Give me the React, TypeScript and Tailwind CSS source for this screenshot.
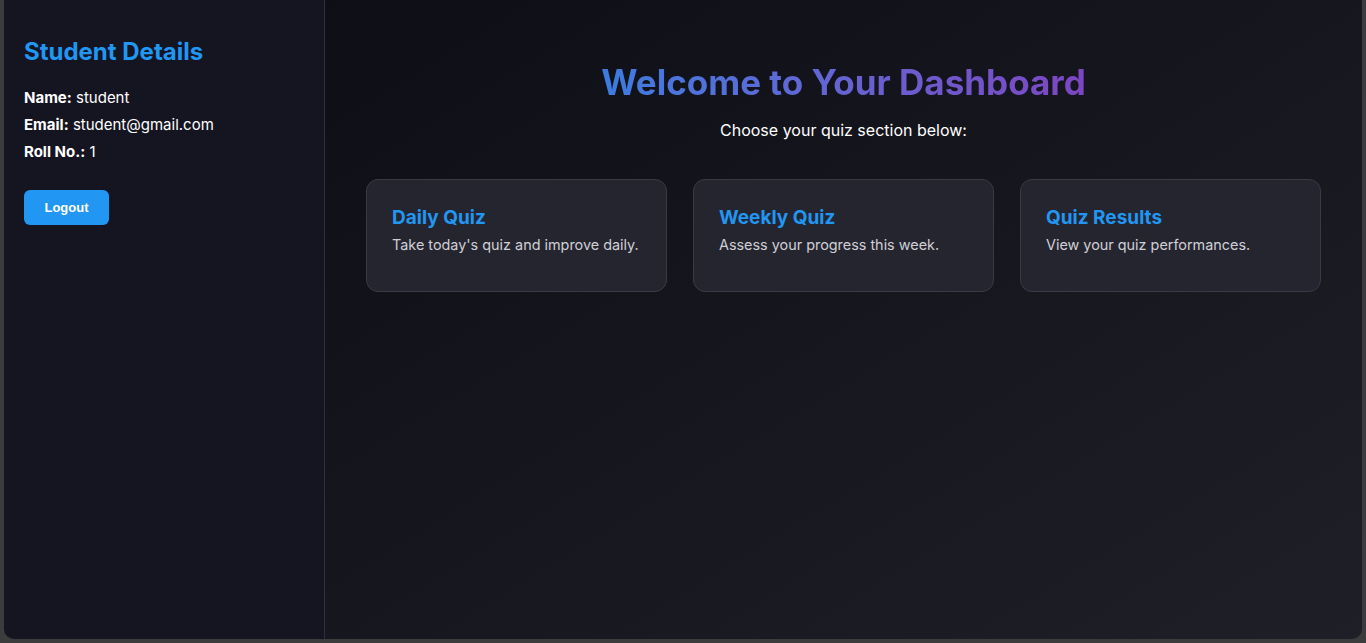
const student = {
  name: "student",
  email: "student@gmail.com",
  roll: "1",
};

const sections = [
  { title: "Daily Quiz", text: "Take today's quiz and improve daily." },
  { title: "Weekly Quiz", text: "Assess your progress this week." },
  { title: "Quiz Results", text: "View your quiz performances." },
];

export default function App() {
  return (
    <div className="h-[643px] w-full bg-[#3c3c3c] px-[4px] pb-[4px] font-['Inter',sans-serif]">
      <div className="flex h-full overflow-hidden rounded-b-[10px]">
        {/* Sidebar */}
        <aside className="w-[321px] shrink-0 border-r border-[#2f2f3d] bg-[#151522] px-5 pt-[36px]">
          <h2 className="text-[24px] font-bold leading-[32px] text-[#2196f3]">
            Student Details
          </h2>
          <div className="mt-[19px] space-y-[5px] text-[15px] leading-[22px] text-white">
            <p>
              <span className="font-bold">Name:</span> {student.name}
            </p>
            <p>
              <span className="font-bold">Email:</span> {student.email}
            </p>
            <p>
              <span className="font-bold">Roll No.:</span> {student.roll}
            </p>
          </div>
          <button className="mt-[27px] h-[35px] w-[85px] rounded-[6px] bg-[#2196f3] font-['Liberation_Sans',Arial,sans-serif] text-[13px] font-bold text-white">
            Logout
          </button>
        </aside>

        {/* Main */}
        <main className="flex-1 bg-gradient-to-br from-[#0e0e16] to-[#1f1f28] px-[41px] pt-[59px]">
          <div className="text-center">
            <h1 className="inline-block bg-gradient-to-r from-[#3a7ce0] to-[#7c46c3] bg-clip-text text-[35px] font-bold leading-[46px] text-transparent">
              Welcome to Your Dashboard
            </h1>
          </div>
          <p className="mt-[13px] text-center text-[16px] leading-[24px] text-white">
            Choose your quiz section below:
          </p>
          <div className="mt-[37px] grid grid-cols-3 gap-[26px]">
            {sections.map((s) => (
              <div
                key={s.title}
                className="h-[113px] rounded-[12px] border border-[#3a3a46] bg-[#25252f] px-[25px] pt-[24px]"
              >
                <h3 className="text-[19px] font-bold leading-[28px] text-[#2196f3]">
                  {s.title}
                </h3>
                <p className="mt-[2px] text-[14.4px] leading-[22px] text-[#cfcfd6]">{s.text}</p>
              </div>
            ))}
          </div>
        </main>
      </div>
    </div>
  );
}
